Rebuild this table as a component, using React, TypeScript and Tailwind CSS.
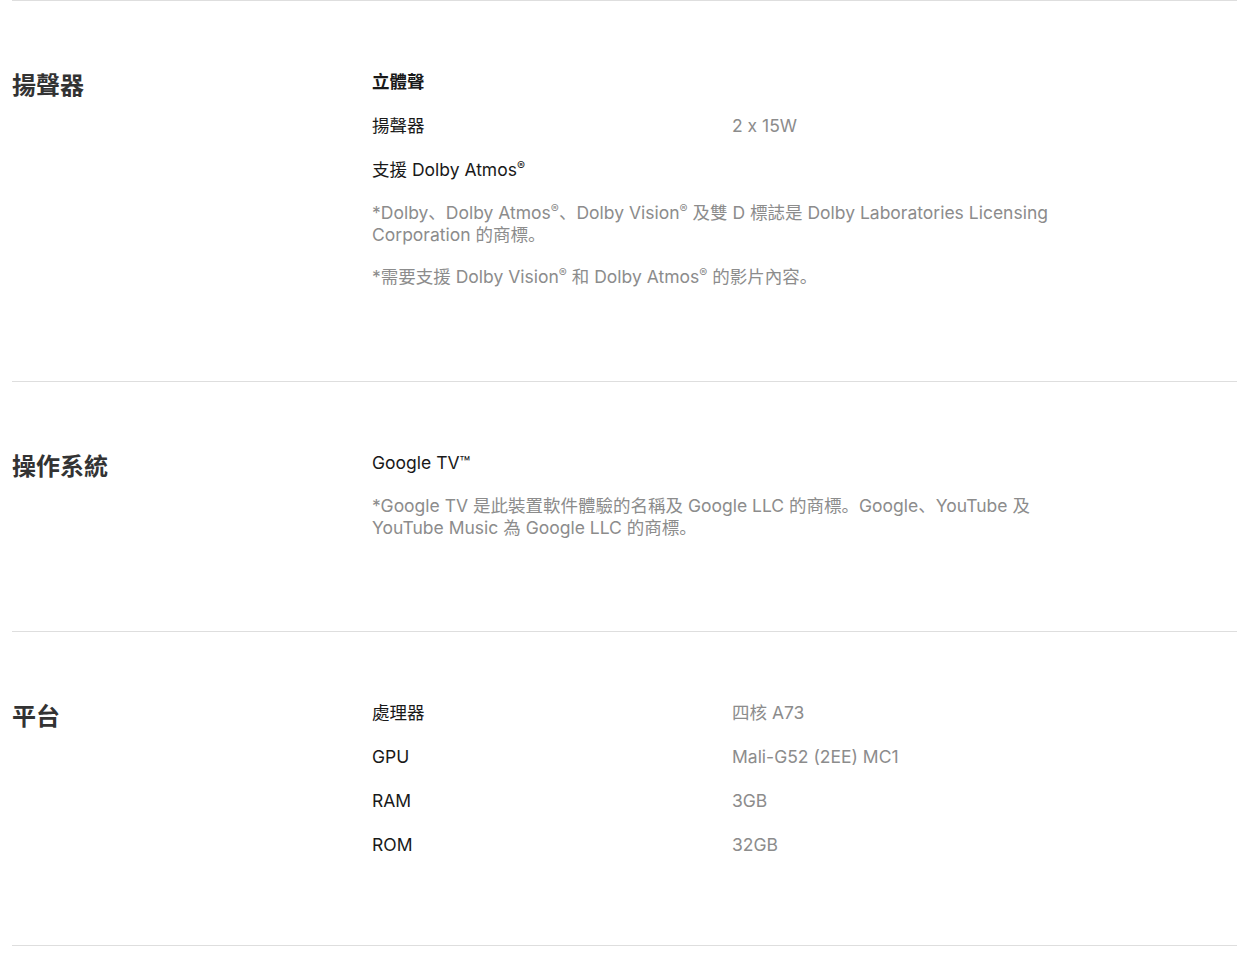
import type { ReactNode } from "react";

const font = "font-['Inter','Noto_Sans_CJK_SC',sans-serif] [font-feature-settings:'calt'_0]";

// small raised registered mark, like the reference
const R = () => <span className="text-[12px] [vertical-align:0.5em] leading-none">®</span>;

type Row = { label: ReactNode; value?: string; bold?: boolean };

interface SpecSectionProps {
  title: string;
  rows: Row[];
  notes?: ReactNode[];
  bottom?: string;
  last?: boolean;
}

const SpecSection = ({ title, rows, notes = [], bottom = "pb-[92px]", last }: SpecSectionProps) => {
  return (
    <section className={`flex border-t border-[#dedede] pt-[69px] ${bottom} ${last ? "border-b" : ""}`}>
      <h2 className="w-[360px] shrink-0 text-[24px] leading-8 font-bold text-[#333333]">
        {title}
      </h2>
      <div className="flex flex-col gap-5">
        {rows.map((row, i) => (
          <div key={i} className="flex text-[17.5px] leading-6">
            <div
              className={`w-[360px] shrink-0 text-[#191919] ${row.bold ? "font-bold" : ""}`}
            >
              {row.label}
            </div>
            {row.value && <div className="text-[#8c8c8c]">{row.value}</div>}
          </div>
        ))}
        {notes.map((note, i) => (
          <p key={i} className="max-w-[720px] text-[17.5px] leading-[22px] text-[#8c8c8c]">
            {note}
          </p>
        ))}
      </div>
    </section>
  );
};

export default function App() {
  return (
    <div className={`min-h-screen bg-white px-3 ${font}`}>
      <SpecSection
        title="揚聲器"
        bottom="pb-[93px]"
        rows={[
          { label: "立體聲", bold: true },
          { label: "揚聲器", value: "2 x 15W" },
          {
            label: (
              <>
                支援 Dolby Atmos<R />
              </>
            ),
          },
        ]}
        notes={[
          <>
            *Dolby、Dolby Atmos<R />、Dolby Vision<R /> 及雙 D 標誌是 Dolby Laboratories Licensing
            Corporation 的商標。
          </>,
          <>
            *需要支援 Dolby Vision<R /> 和 Dolby Atmos<R /> 的影片內容。
          </>,
        ]}
      />
      <SpecSection
        title="操作系統"
        rows={[{ label: "Google TV™" }]}
        notes={[
          "*Google TV 是此裝置軟件體驗的名稱及 Google LLC 的商標。Google、YouTube 及 YouTube Music 為 Google LLC 的商標。",
        ]}
      />
      <SpecSection
        title="平台"
        bottom="pb-[88px]"
        last
        rows={[
          { label: "處理器", value: "四核 A73" },
          { label: "GPU", value: "Mali-G52 (2EE) MC1" },
          { label: "RAM", value: "3GB" },
          { label: "ROM", value: "32GB" },
        ]}
      />
    </div>
  );
}
